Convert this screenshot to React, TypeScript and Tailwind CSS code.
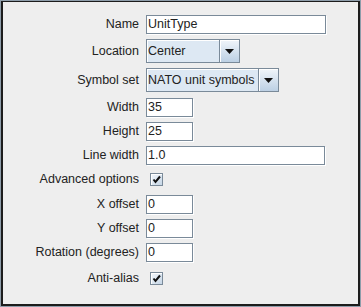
import React from 'react'

const font = { fontFamily: '"Liberation Sans", Arial, sans-serif' }

function TextField({ value, width }: { value: string; width: number }) {
  return (
    <div
      className="h-[19px] border border-[#7a8a99] bg-white shadow-[1px_1px_0_#ffffff] flex items-center pl-[1px] text-[12.5px] text-[#222]"
      style={{ width }}
    >
      {value}
    </div>
  )
}

function Combo({ value, width }: { value: string; width: number }) {
  return (
    <div className="flex h-[24px]">
      <div
        className="h-full border border-[#7a8a99] bg-[#dde8f3] shadow-[inset_1px_1px_0_#ffffff] flex items-center pl-[1px] text-[12.5px] text-[#222] whitespace-nowrap"
        style={{ width }}
      >
        {value}
      </div>
      <div className="h-full w-[20px] border border-l-0 border-[#7a8a99] bg-gradient-to-b from-[#f0f5fa] to-[#bcd0e4] shadow-[inset_1px_1px_0_#ffffff] flex items-center justify-center">
        <svg width="9" height="5" viewBox="0 0 9 5">
          <path d="M0 0H9L4.5 5Z" fill="#111" />
        </svg>
      </div>
    </div>
  )
}

function Check() {
  return (
    <div className="ml-[4px] w-[13px] h-[13px] border border-[#7a8a99] bg-gradient-to-br from-[#f4f8fc] to-[#c6d6e6] shadow-[inset_1px_1px_0_#ffffff] flex items-center justify-center">
      <svg width="9" height="9" viewBox="0 0 9 9">
        <path d="M1.5 4.5L3.5 7L8 1.5" stroke="#111" strokeWidth="2" fill="none" />
      </svg>
    </div>
  )
}

function Row({ label, children, h, mt }: { label: string; children: React.ReactNode; h: number; mt: number }) {
  return (
    <div className="flex items-center" style={{ height: h, marginTop: mt }}>
      <div className="w-[136px] text-right text-[12.5px] text-[#222] whitespace-nowrap">{label}</div>
      <div className="ml-[7px]">{children}</div>
    </div>
  )
}

export default function App() {
  return (
    <div className="w-[361px] h-[307px] bg-[#eeeeee]" style={font}>
      <div className="w-full h-full border border-[#8e9daa]">
        <div className="w-full h-full border-t border-l-2 border-r-2 border-b-2 border-[#1c1c1c] bg-[#eeeeee] flex flex-col">
          <Row label="Name" h={20} mt={12}>
            <TextField value="UnitType" width={180} />
          </Row>
          <Row label="Location" h={24} mt={5}>
            <Combo value="Center" width={74} />
          </Row>
          <Row label="Symbol set" h={24} mt={5}>
            <Combo value="NATO unit symbols" width={113} />
          </Row>
          <Row label="Width" h={20} mt={5}>
            <TextField value="35" width={47} />
          </Row>
          <Row label="Height" h={20} mt={4}>
            <TextField value="25" width={47} />
          </Row>
          <Row label="Line width" h={20} mt={4}>
            <TextField value="1.0" width={179} />
          </Row>
          <Row label="Advanced options" h={13} mt={8}>
            <Check />
          </Row>
          <Row label="X offset" h={20} mt={8}>
            <TextField value="0" width={47} />
          </Row>
          <Row label="Y offset" h={20} mt={4}>
            <TextField value="0" width={47} />
          </Row>
          <Row label="Rotation (degrees)" h={20} mt={4}>
            <TextField value="0" width={47} />
          </Row>
          <Row label="Anti-alias" h={13} mt={10}>
            <Check />
          </Row>
        </div>
      </div>
    </div>
  )
}
